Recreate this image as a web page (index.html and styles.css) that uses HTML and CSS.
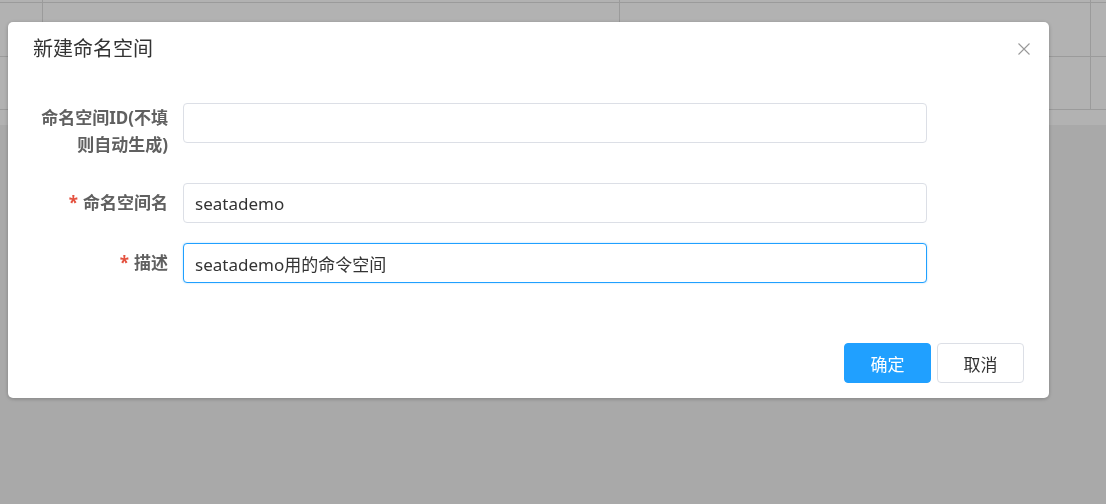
FILE: index.html
```html
<!DOCTYPE html>
<html lang="zh-CN">
<head>
    <meta charset="UTF-8">
    <meta name="viewport" content="width=device-width, initial-scale=1.0">
    <title>新建命名空间</title>
    <link rel="stylesheet" href="styles.css">
</head>
<body>
    <div class="page">
        <div class="table">
            <div class="table-row row-cut">
                <div class="cell"></div><div class="cell"></div><div class="cell"></div><div class="cell"></div>
            </div>
            <div class="table-row row-first">
                <div class="cell"></div><div class="cell"></div><div class="cell"></div><div class="cell"></div>
            </div>
            <div class="table-row row-second">
                <div class="cell"></div><div class="cell"></div><div class="cell"></div><div class="cell"></div>
            </div>
        </div>
        <div class="table-foot"></div>
    </div>

    <div class="mask"></div>

    <div class="dialog">
        <div class="dialog-header">
            <span class="dialog-title">新建命名空间</span>
            <button class="dialog-close" type="button" aria-label="关闭">
                <svg width="12" height="12" viewBox="0 0 12 12">
                    <path d="M0.5 0.5 L11.5 11.5 M11.5 0.5 L0.5 11.5" stroke="#999" stroke-width="1.1" fill="none"/>
                </svg>
            </button>
        </div>

        <div class="dialog-body">
            <form class="form">
                <div class="form-item">
                    <label class="form-label label-wrap" for="nsId">命名空间ID(不填则自动生成)</label>
                    <input class="form-input" id="nsId" type="text">
                </div>
                <div class="form-item">
                    <label class="form-label" for="nsName"><span class="required">*</span>命名空间名</label>
                    <input class="form-input" id="nsName" type="text" value="seatademo">
                </div>
                <div class="form-item">
                    <label class="form-label" for="nsDesc"><span class="required">*</span>描述</label>
                    <input class="form-input is-focus" id="nsDesc" type="text" value="seatademo用的命令空间">
                </div>
            </form>
        </div>

        <div class="dialog-footer">
            <button class="btn btn-primary" type="button">确定</button>
            <button class="btn" type="button">取消</button>
        </div>
    </div>

    <script>
        // put the caret at the end of the description, like the user just typed it
        const desc = document.getElementById('nsDesc');
        desc.focus();
        desc.setSelectionRange(desc.value.length, desc.value.length);
    </script>
</body>
</html>
```

FILE: styles.css
```css
* {
    box-sizing: border-box;
}
body {
    margin: 0;
    font-family: "Noto Sans", "Noto Sans CJK SC", sans-serif;
    background-color: #f3f3f3;
    overflow: hidden;
}
.page {
    height: 504px;
}
.table {
    background-color: #fff;
}
.table-row {
    display: grid;
    grid-template-columns: 43px 577px 471px 1fr;
    border-bottom: 1px solid #dedede;
}
.cell {
    border-right: 1px solid #dedede;
}
.cell:last-child {
    border-right: none;
}
.row-cut {
    height: 3px;
}
.row-first {
    height: 54px;
}
.row-second {
    height: 53px;
}
.table-foot {
    height: 15px;
    background-color: #fff;
}
.mask {
    position: fixed;
    inset: 0;
    background-color: rgba(0, 0, 0, 0.3);
}

/* dialog */
.dialog {
    position: fixed;
    left: 8px;
    top: 22px;
    width: 1041px;
    background-color: #fff;
    border-radius: 5px;
    box-shadow: 0 1px 4px rgba(0, 0, 0, 0.25);
}
.dialog-header {
    display: flex;
    justify-content: space-between;
    align-items: center;
    padding: 17px 18px 0 25px;
}
.dialog-title {
    font-size: 20px;
    line-height: 20px;
    color: #333;
}
.dialog-close {
    background: none;
    border: none;
    padding: 0;
    width: 14px;
    height: 14px;
    display: flex;
    align-items: center;
    justify-content: center;
    cursor: pointer;
}
.dialog-body {
    padding: 44px 20px 0 20px;
}
.form {
    display: flex;
    flex-direction: column;
    gap: 20px;
}
.form-item {
    display: flex;
    align-items: flex-start;
}
.form-label {
    width: 155px;
    padding: 0 15px 0 5px;
    text-align: right;
    font-size: 17px;
    font-weight: bold;
    line-height: 40px;
    color: #606060;
}
.label-wrap {
    line-height: 27px;
    padding-top: 1px;
    padding-bottom: 5px;
}
.required {
    color: #e4503e;
    margin-right: 5px;
}
.form-input {
    width: 744px;
    height: 40px;
    padding: 0 11px;
    border: 1px solid #dcdfe6;
    border-radius: 4px;
    font-family: "Noto Sans", "Noto Sans CJK SC", sans-serif;
    font-size: 17px;
    color: #333;
    outline: none;
}
.form-input.is-focus,
.form-input:focus {
    border-color: #20a0ff;
    box-shadow: 0 0 2px rgba(32, 160, 255, 0.4);
}
.dialog-footer {
    display: flex;
    justify-content: flex-end;
    gap: 6px;
    padding: 60px 25px 15px;
}
.btn {
    width: 87px;
    height: 40px;
    border: 1px solid #dcdfe6;
    border-radius: 4px;
    background-color: #fff;
    color: #333;
    font-family: "Noto Sans", "Noto Sans CJK SC", sans-serif;
    font-size: 17px;
    cursor: pointer;
}
.btn-primary {
    background-color: #20a0ff;
    border-color: #20a0ff;
    color: #fff;
}
```
